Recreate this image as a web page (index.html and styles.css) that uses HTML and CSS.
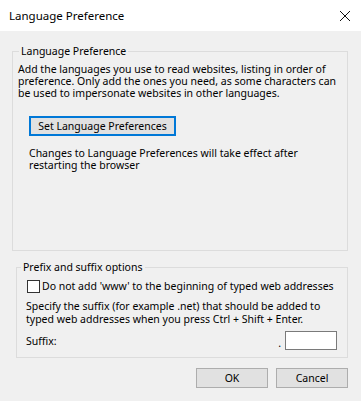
FILE: index.html
```html
<!DOCTYPE html>
<html lang="en">
<head>
  <meta charset="UTF-8">
  <title>Language Preference</title>
  <link rel="stylesheet" href="styles.css">
</head>
<body>
  <div class="titlebar">
    <span class="title">Language Preference</span>
    <svg class="close" width="12" height="12" viewBox="0 0 12 12">
      <path d="M1 1 L11 11 M11 1 L1 11" stroke="#111" stroke-width="1" fill="none"/>
    </svg>
  </div>

  <div class="content">
    <fieldset class="group group-lang">
      <legend>Language Preference</legend>
      <p class="desc">Add the languages you use to read websites, listing in order of preference. Only add the ones you need, as some characters can be used to impersonate websites in other languages.</p>
      <div class="indent">
        <button class="btn btn-default btn-wide">Set Language Preferences</button>
        <p class="note">Changes to Language Preferences will take effect after restarting the browser</p>
      </div>
    </fieldset>

    <fieldset class="group group-suffix">
      <legend>Prefix and suffix options</legend>
      <label class="check">
        <span class="box"></span>
        <span>Do not add 'www' to the beginning of typed web addresses</span>
      </label>
      <p class="desc2">Specify the suffix (for example .net) that should be added to typed web addresses when you press Ctrl + Shift + Enter.</p>
      <div class="suffix-row">
        <span>Suffix:</span>
        <span class="dot">.</span>
        <input class="suffix" type="text">
      </div>
    </fieldset>

    <div class="actions">
      <button class="btn">OK</button>
      <button class="btn">Cancel</button>
    </div>
  </div>
</body>
</html>
```

FILE: styles.css
```css
body {
  margin: 0;
  width: 361px;
  height: 401px;
  background-color: #f0f0f0;
  font-family: "Noto Sans", sans-serif;
  font-size: 10.5px;
  color: #000;
  overflow: hidden;
}
.titlebar {
  height: 31px;
  background-color: #fff;
  display: flex;
  align-items: center;
  justify-content: space-between;
  padding: 0 10px 0 9px;
  font-size: 11.5px;
}
.close {
  margin-top: 1px;
}
.content {
  padding: 0 13px 0 12px;
}
.group {
  border: 1px solid #dcdcdc;
  margin: 0;
  padding: 0;
  min-width: 0;
}
.group legend {
  padding: 0 2px;
  line-height: 14px;
}
.group-lang {
  margin-top: 13px;
  padding: 5px 10px 79px 5px;
}
.group-lang legend {
  margin-left: 1px;
}
.desc {
  margin: 0;
  line-height: 12px;
}
.indent {
  padding-left: 11px;
}
.btn {
  font-family: inherit;
  font-size: inherit;
  color: #000;
  background-color: #e1e1e1;
  border: 1px solid #adadad;
  border-radius: 0;
  height: 20px;
  padding: 0;
}
.btn-default {
  border: 2px solid #0078d7;
}
.btn-wide {
  width: 147px;
  margin-top: 17px;
}
.note {
  margin: 11px 0 0;
  line-height: 12px;
}
.group-suffix {
  margin: 9px 0 0 4px;
  padding: 5px 10px 7px 9px;
}
.group-suffix legend {
  margin-left: -5px;
}
.check {
  display: flex;
  align-items: center;
  gap: 2px;
  margin-left: 1px;
}
.box {
  width: 11px;
  height: 11px;
  border: 1px solid #333;
  background-color: #fff;
}
.desc2 {
  margin: 7px 0 0;
  line-height: 12.5px;
}
.suffix-row {
  display: flex;
  align-items: center;
  margin-top: 6px;
}
.dot {
  margin-left: auto;
  margin-right: 4px;
  align-self: flex-end;
  line-height: 14px;
}
.suffix {
  width: 50px;
  height: 17px;
  box-sizing: content-box;
  border: 1px solid #7a7a7a;
  padding: 0;
  margin: 0;
  background-color: #fff;
}
.actions {
  display: flex;
  justify-content: flex-end;
  gap: 8px;
  margin-top: 10px;
}
.actions .btn {
  width: 72px;
}
```
